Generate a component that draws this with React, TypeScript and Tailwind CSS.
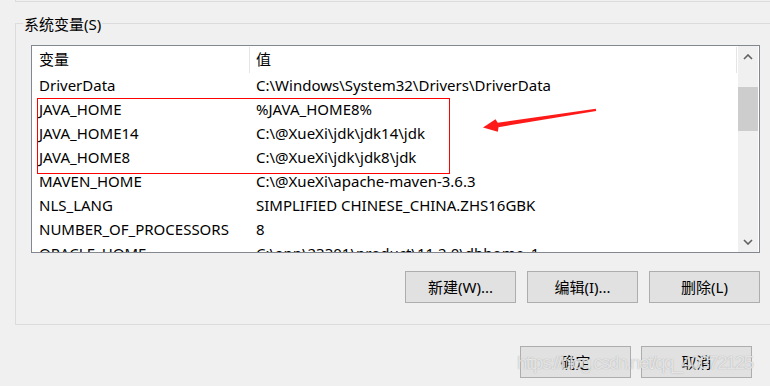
import React from "react";

const rows: [string, string][] = [
  ["DriverData", "C:\\Windows\\System32\\Drivers\\DriverData"],
  ["JAVA_HOME", "%JAVA_HOME8%"],
  ["JAVA_HOME14", "C:\\@XueXi\\jdk\\jdk14\\jdk"],
  ["JAVA_HOME8", "C:\\@XueXi\\jdk\\jdk8\\jdk"],
  ["MAVEN_HOME", "C:\\@XueXi\\apache-maven-3.6.3"],
  ["NLS_LANG", "SIMPLIFIED CHINESE_CHINA.ZHS16GBK"],
  ["NUMBER_OF_PROCESSORS", "8"],
  ["ORACLE_HOME", "C:\\app\\23301\\product\\11.2.0\\dbhome_1"],
];

function WinButton({ children }: { children: React.ReactNode }) {
  return (
    <button className="w-[111px] h-[32px] bg-[#e1e1e1] border border-[#adadad] text-[15px] text-black flex items-center justify-center">
      {children}
    </button>
  );
}

function Chevron({ up }: { up?: boolean }) {
  return (
    <svg width="10" height="6" viewBox="0 0 10 6">
      <polyline
        points={up ? "1,5 5,1 9,5" : "1,1 5,5 9,1"}
        fill="none"
        stroke="#606060"
        strokeWidth="1.6"
      />
    </svg>
  );
}

export default function App() {
  return (
    <div
      className="relative w-[770px] h-[386px] overflow-hidden bg-[#f0f0f0] text-black"
      style={{ fontFamily: '"Noto Sans", "Noto Sans CJK SC", sans-serif' }}
    >
      <div className="ml-[15px] h-[2px] w-[755px] border-l border-b border-[#dcdcdc]" />

      <div className="mt-[21px] ml-[15px] w-[760px] border-l border-t border-b border-[#dcdcdc] flex flex-col pb-[21px]">
        <div className="-mt-[10px] ml-[7px] px-[1px] w-fit bg-[#f0f0f0] text-[15px] leading-[20px]">
          系统变量(S)
        </div>

        <div className="mt-[11px] ml-[15px] w-[729px] h-[208px] border border-[#828790] bg-white flex">
          <div className="w-[706px] flex flex-col overflow-hidden text-[15px]">
            <div className="h-[28px] flex shrink-0">
              <div className="w-[217px] pl-[7px] pb-[1px] flex items-center">变量</div>
              <div className="w-px my-[1px] bg-[#e5e5e5]" />
              <div className="flex-1 pl-[6px] pb-[1px] flex items-center">值</div>
              <div className="w-px my-[1px] bg-[#e5e5e5]" />
              <div className="w-px" />
            </div>
            {rows.map(([name, value]) => (
              <div key={name} className="h-[24px] shrink-0 grid grid-cols-[218px_1fr] items-center pb-[1px]">
                <div className="pl-[7px] whitespace-nowrap">{name}</div>
                <div className="pl-[6px] whitespace-nowrap">{value}</div>
              </div>
            ))}
          </div>
          <div className="w-[20px] bg-[#f0f0f0] flex flex-col">
            <div className="h-[21px] flex items-center justify-center">
              <Chevron up />
            </div>
            <div className="flex-1">
              <div className="mt-[20px] h-[44px] bg-[#cdcdcd]" />
            </div>
            <div className="h-[21px] flex items-center justify-center">
              <Chevron />
            </div>
          </div>
          <div className="w-px" />
        </div>

        <div className="mt-[18px] ml-[15px] w-[729px] flex justify-end gap-[11px]">
          <WinButton>新建(W)...</WinButton>
          <WinButton>编辑(I)...</WinButton>
          <WinButton>删除(L)</WinButton>
        </div>
      </div>

      <div className="mt-[21px] pr-[18px] flex justify-end gap-[10px]">
        <WinButton>确定</WinButton>
        <WinButton>取消</WinButton>
      </div>

      {/* annotation: red box + arrow */}
      <div className="absolute left-[37px] top-[98px] w-[413px] h-[76px] border border-[#ff0000] pointer-events-none" />
      <svg className="absolute left-0 top-0 pointer-events-none" width="770" height="386">
        <polygon
          points="596.2,111 595.8,108.8 497.6,122.8 498.4,127.2"
          fill="#ff1a1a"
        />
        <polygon points="483,127.5 495.5,119.3 499,124.8 497.8,131.8" fill="#ff1a1a" />
      </svg>

      {/* watermark */}
      <div
        className="absolute left-[517px] top-[350px] text-[19px] leading-[26px] tracking-[-1.7px] whitespace-nowrap text-white/70 pointer-events-none"
        style={{
          fontFamily: '"Liberation Sans", Arial, sans-serif',
          textShadow: "0 0 1px rgba(130,130,130,0.7)",
        }}
      >
        https://blog.csdn.net/qq_40372125
      </div>
    </div>
  );
}
